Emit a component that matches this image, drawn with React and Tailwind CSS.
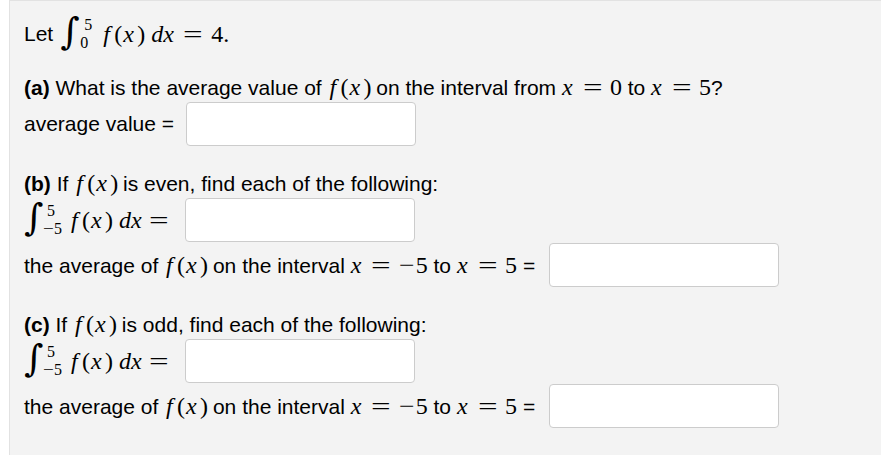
import React from "react";

const sans = { fontFamily: '"Liberation Sans", Arial, sans-serif' };
const serif = { fontFamily: '"Liberation Serif", "Times New Roman", serif' };
const intFont = { fontFamily: '"DejaVu Serif", "Liberation Serif", serif' };

// math glyphs sit in fixed cells, like a TeX renderer lays them out
function V({ children, className = "" }) {
  return (
    <span className={"inline-block italic " + className} style={serif}>
      {children}
    </span>
  );
}

function N({ children, className = "" }) {
  return (
    <span className={"inline-block " + className} style={serif}>
      {children}
    </span>
  );
}

function Fx() {
  return (
    <span className="text-[24px]">
      <V className="w-[12px] pl-[2px]">f</V>
      <N className="w-[8px] pl-[1px]">(</N>
      <V className="w-[16px] pl-[2px]">x</V>
      <N className="w-[7px]">)</N>
    </span>
  );
}

function X() {
  return <V className="w-[13px] text-[24px]">x</V>;
}

function Dx() {
  return (
    <span className="ml-[7px] text-[24px]">
      <V className="w-[12px]">d</V>
      <V className="w-[13px]">x</V>
    </span>
  );
}

function Eq({ className = "w-[35px]" }) {
  return (
    <N className={"text-center text-[24px] " + className}>
      <span className="inline-block scale-x-[1.45]">=</span>
    </N>
  );
}

function Minus5() {
  return (
    <N className="text-[24px]">
      <span className="inline-block w-[17px] text-center">
        <span className="inline-block scale-x-[1.15]">−</span>
      </span>
      5
    </N>
  );
}

function Minus5Small() {
  return (
    <span>
      <span className="inline-block scale-x-[1.2] pr-[1px]">−</span>5
    </span>
  );
}

function Integral({ lo, hi, loPad, hiPad }) {
  return (
    <div className="flex h-[34px] shrink-0 items-center">
      <span className="relative -top-[3px] w-[20px] text-[37px] leading-none" style={intFont}>
        ∫
      </span>
      <span className="flex h-[34px] flex-col justify-between text-[16px] leading-none" style={serif}>
        <span className={hiPad}>{hi}</span>
        <span className={loPad}>{lo}</span>
      </span>
    </div>
  );
}

function Box({ className = "" }) {
  return (
    <div className={"h-[44px] w-[230px] shrink-0 rounded-[4px] border border-[#cccccc] bg-white " + className} />
  );
}

function AvgRow() {
  return (
    <div className="flex h-[44px] items-center">
      <span className="whitespace-nowrap">
        the average of <Fx /> on the interval <X />
        <Eq />
        <Minus5 /> to <X />
        <Eq />
        <N className="w-[12px] text-[24px]">5</N>
        <span className="ml-[6px]">=</span>
      </span>
      <Box className="ml-[14px]" />
    </div>
  );
}

function IntRow() {
  return (
    <div className="flex h-[44px] items-center">
      <Integral lo={<Minus5Small />} hi="5" loPad="pl-0" hiPad="pl-[3px]" />
      <span className="ml-[7px] whitespace-nowrap">
        <Fx />
        <Dx />
        <Eq className="ml-[2px] w-[26px]" />
      </span>
      <Box className="ml-[13px]" />
    </div>
  );
}

export default function App() {
  return (
    <div className="min-h-[458px] bg-white">
      <div
        className="ml-[9px] h-[455px] border-l border-t border-[#e2e2e2] bg-[#f3f3f3] pl-[14px] pt-[13px] text-[21px] text-black"
        style={sans}
      >
        <div className="flex h-[40px] items-center">
          <span>Let</span>
          <div className="ml-[7px]">
            <Integral lo="0" hi="5" loPad="pl-0" hiPad="pl-[4px]" />
          </div>
          <span className="ml-[9px] whitespace-nowrap">
            <Fx />
            <Dx />
            <Eq className="ml-[2px] w-[30px]" />
            <N className="ml-[3px] text-[24px]">4.</N>
          </span>
        </div>

        <div className="mt-[18px] flex h-[30px] items-center">
          <span className="whitespace-nowrap">
            <span className="font-bold">(a)</span> What is the average value of <Fx /> on the interval from <X />
            <Eq />
            <N className="w-[12px] text-[24px]">0</N> to <X />
            <Eq />
            <N className="w-[12px] text-[24px]">5</N>?
          </span>
        </div>
        <div className="flex h-[44px] items-center">
          <span>average value =</span>
          <Box className="ml-[12px]" />
        </div>

        <div className="mt-[22px] flex h-[30px] items-center">
          <span className="whitespace-nowrap">
            <span className="font-bold">(b)</span> If <Fx /> is even, find each of the following:
          </span>
        </div>
        <IntRow />
        <div className="mt-[1px]">
          <AvgRow />
        </div>

        <div className="mt-[22px] flex h-[30px] items-center">
          <span className="whitespace-nowrap">
            <span className="font-bold">(c)</span> If <Fx /> is odd, find each of the following:
          </span>
        </div>
        <IntRow />
        <div className="mt-[1px]">
          <AvgRow />
        </div>
      </div>
    </div>
  );
}
